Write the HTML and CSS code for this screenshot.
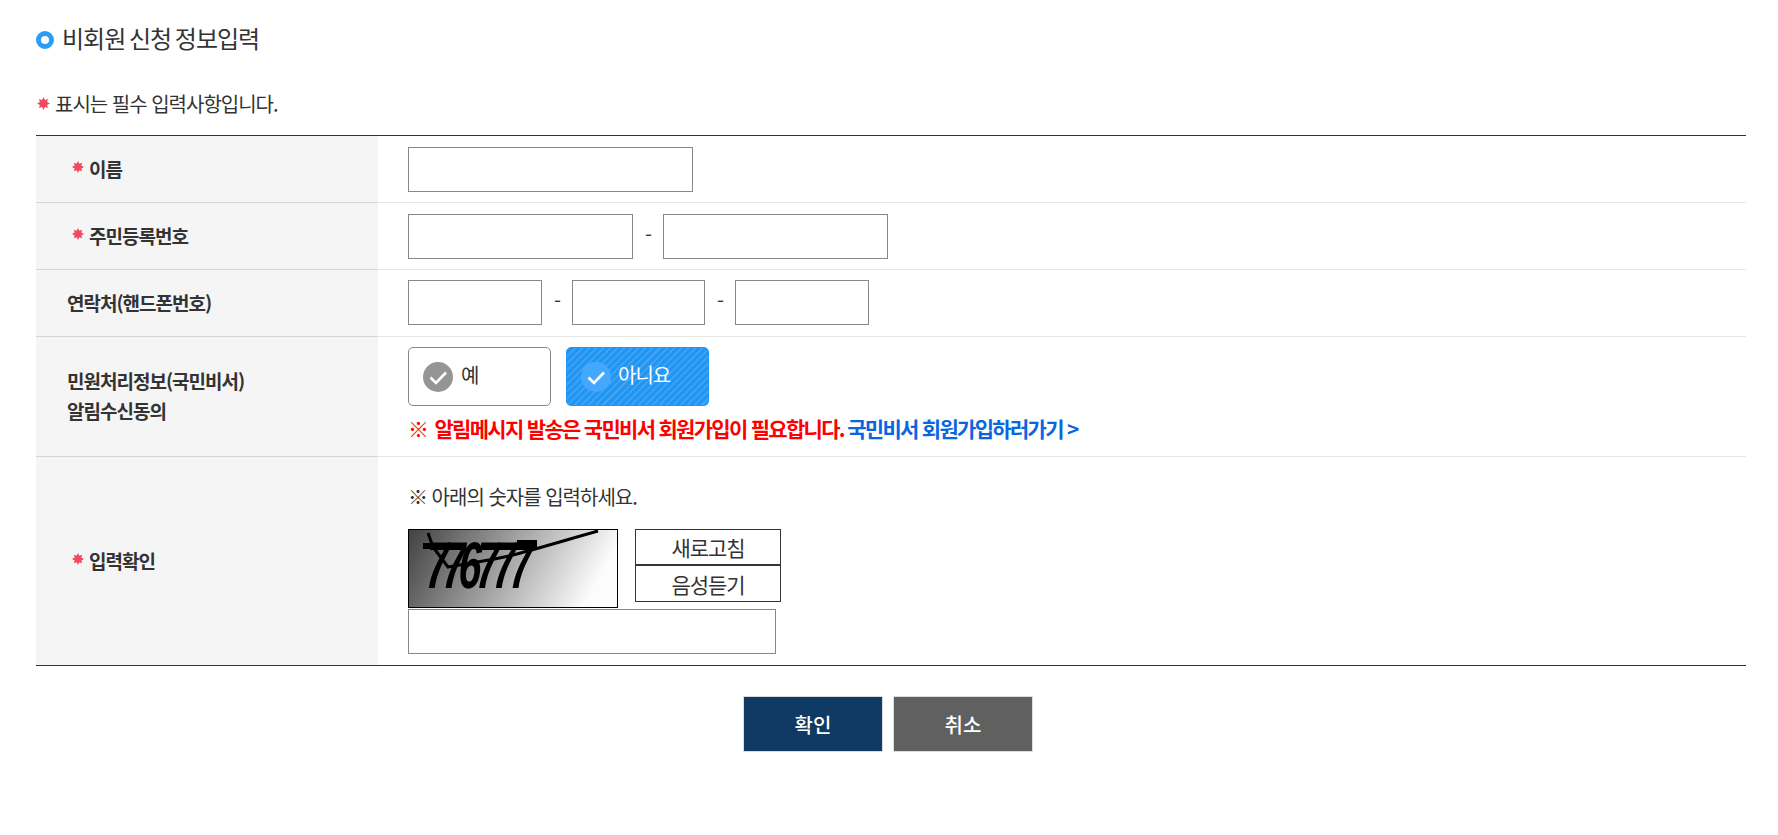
FILE: index.html
```html
<!DOCTYPE html>
<html lang="ko">
<head>
    <meta charset="UTF-8">
    <meta name="viewport" content="width=device-width, initial-scale=1.0">
    <title>비회원 신청 정보입력</title>
    <link rel="stylesheet" href="styles.css">
</head>
<body>
    <svg class="sprite" width="0" height="0">
        <symbol id="star" viewBox="0 0 12 12">
            <path d="M6 0 L7.38 2.67 L10.24 1.76 L9.33 4.62 L12 6 L9.33 7.38 L10.24 10.24 L7.38 9.33 L6 12 L4.62 9.33 L1.76 10.24 L2.67 7.38 L0 6 L2.67 4.62 L1.76 1.76 L4.62 2.67 Z" fill="#ef4a5e"/>
        </symbol>
        <symbol id="check" viewBox="0 0 30 30">
            <path d="M7.5 15.5 L13 21 L23 10.5" fill="none" stroke="#fff" stroke-width="2.6"/>
        </symbol>
    </svg>

    <div class="container">
        <h2 class="title"><span class="title-dot"></span><span class="title-text">비회원 신청 정보입력</span></h2>

        <p class="req-note"><svg class="star star-note"><use href="#star"/></svg>표시는 필수 입력사항입니다.</p>

        <table class="form-table">
            <tr class="row-basic">
                <th><span class="req"><svg class="star"><use href="#star"/></svg>이름</span></th>
                <td><input class="field w-name" type="text"></td>
            </tr>
            <tr class="row-basic">
                <th><span class="req"><svg class="star"><use href="#star"/></svg>주민등록번호</span></th>
                <td>
                    <div class="field-group">
                        <input class="field w-rrn" type="text">
                        <span class="dash">-</span>
                        <input class="field w-rrn" type="text">
                    </div>
                </td>
            </tr>
            <tr class="row-tel">
                <th>연락처(핸드폰번호)</th>
                <td>
                    <div class="field-group">
                        <input class="field w-tel" type="text">
                        <span class="dash">-</span>
                        <input class="field w-tel-mid" type="text">
                        <span class="dash">-</span>
                        <input class="field w-tel" type="text">
                    </div>
                </td>
            </tr>
            <tr class="row-agree">
                <th>민원처리정보(국민비서)<br>알림수신동의</th>
                <td>
                    <div class="choices">
                        <label class="choice"><span class="choice-icon"><svg><use href="#check"/></svg></span><span class="choice-text">예</span></label>
                        <label class="choice on"><span class="choice-icon"><svg><use href="#check"/></svg></span><span class="choice-text">아니요</span></label>
                    </div>
                    <p class="alert"><span class="alert-mark">※</span> 알림메시지 발송은 국민비서 회원가입이 필요합니다. <a href="#">국민비서 회원가입하러가기 &gt;</a></p>
                </td>
            </tr>
            <tr class="row-captcha">
                <th><span class="req"><svg class="star"><use href="#star"/></svg>입력확인</span></th>
                <td>
                    <p class="captcha-note">※ 아래의 숫자를 입력하세요.</p>
                    <div class="captcha">
                        <svg class="captcha-img" viewBox="0 0 208 77">
                            <defs>
                                <linearGradient id="shade" x1="0" y1="0" x2="1" y2="0.2">
                                    <stop offset="0" stop-color="#424242"/>
                                    <stop offset="1" stop-color="#fcfcfc"/>
                                </linearGradient>
                            </defs>
                            <rect width="208" height="77" fill="url(#shade)"/>
                            <text class="captcha-text" transform="translate(14 58) skewX(-8) scale(0.62 1)" textLength="172" lengthAdjust="spacing">776777</text>
                            <rect x="14" y="13" width="25" height="6"/>
                            <rect x="108" y="10" width="20" height="9"/>
                            <path class="captcha-line" d="M19 3 L24 17 L39 37 C60 33 79 31 100 26 C128 19 160 9 189 1"/>
                        </svg>
                        <div class="captcha-btns">
                            <button class="captcha-btn" type="button">새로고침</button>
                            <button class="captcha-btn" type="button">음성듣기</button>
                        </div>
                    </div>
                    <input class="field w-captcha" type="text">
                </td>
            </tr>
        </table>

        <div class="actions">
            <button class="btn btn-ok" type="button">확인</button>
            <button class="btn btn-cancel" type="button">취소</button>
        </div>
    </div>
</body>
</html>
```

FILE: styles.css
```css
* {
    box-sizing: border-box;
}

body {
    margin: 0;
    background: #fff;
    color: #333;
    font-family: "Noto Sans CJK KR", "Noto Sans", sans-serif;
    font-size: 20px;
    letter-spacing: -0.05em;
}

.sprite {
    position: absolute;
}

.container {
    padding: 0 32px 0 36px;
}

.title {
    display: flex;
    align-items: center;
    height: 36px;
    margin: 22px 0 0;
    font-size: 24px;
    font-weight: 400;
    word-spacing: -2px;
}

.title-dot {
    width: 18px;
    height: 18px;
    margin-right: 8px;
    border: 5px solid #2a9df4;
    border-radius: 50%;
}

.title-text {
    margin-bottom: 5px;
}

.req-note {
    display: flex;
    align-items: center;
    height: 30px;
    margin: 30px 0 0;
}

.star {
    width: 12px;
    height: 12px;
    margin-right: 5px;
    position: relative;
    top: -4px;
}

.star-note {
    width: 13px;
    height: 13px;
    margin-right: 5px;
    margin-left: 1px;
    top: 0;
}

.form-table {
    width: 100%;
    margin-top: 17px;
    border-collapse: separate;
    border-spacing: 0;
    border-top: 1px solid #333;
    border-bottom: 1px solid #333;
    table-layout: fixed;
}

.form-table th {
    width: 342px;
    padding: 0 0 0 31px;
    background: #f5f5f5;
    border-bottom: 1px solid #d4d4d4;
    font-weight: 700;
    font-size: 19px;
    line-height: 30px;
    text-align: left;
}

.form-table td {
    padding: 11px 30px 10px;
    border-bottom: 1px solid #e6e6e6;
}

.form-table .row-tel td {
    padding: 10px 30px 11px;
}

.form-table .row-agree td {
    padding: 10px 30px 12px;
}

.form-table .row-agree th {
    padding-bottom: 2px;
}

.form-table .row-captcha td {
    padding: 26px 30px 11px;
}

.form-table tr:last-child th,
.form-table tr:last-child td {
    border-bottom: 0;
}

.req {
    margin-left: 5px;
}

.field {
    display: block;
    height: 45px;
    padding: 0 8px;
    background: #fff;
    border: 1px solid #888;
    border-radius: 0;
}

.w-name {
    width: 285px;
}

.w-rrn {
    width: 225px;
}

.w-tel {
    width: 134px;
}

.w-tel-mid {
    width: 133px;
}

.w-captcha {
    width: 368px;
    margin-top: 1px;
}

.field-group {
    display: flex;
    align-items: center;
}

.dash {
    width: 30px;
    text-align: center;
    position: relative;
    top: -2px;
}

.choices {
    display: flex;
    gap: 15px;
}

.choice {
    display: flex;
    align-items: center;
    width: 143px;
    height: 59px;
    padding-left: 14px;
    background: #fff;
    border: 1px solid #888;
    border-radius: 5px;
    font-size: 20px;
    line-height: 30px;
}

.choice-icon {
    flex: none;
    width: 30px;
    height: 30px;
    margin-right: 8px;
    background: #959595;
    border-radius: 50%;
}

.choice-icon svg {
    display: block;
    width: 30px;
    height: 30px;
}

.choice-text {
    margin-bottom: 3px;
}

.choice.on {
    background: repeating-linear-gradient(-45deg, #2196f3 0 3.5px, #45a5f5 3.5px 5px);
    border-color: #2196f3;
    color: #fff;
}

.choice.on .choice-icon {
    background: #45a8ff;
    margin-right: 7px;
}

.alert {
    margin: 6px 0 0;
    color: #f00;
    font-size: 21px;
    font-weight: 700;
    line-height: 32px;
    letter-spacing: -1.7px;
}

.alert-mark {
    margin-right: 3px;
}

.alert a {
    margin-left: -1px;
    color: #0a66e0;
    text-decoration: none;
}

.captcha-note {
    margin: 0;
    font-size: 20px;
    line-height: 28px;
}

.captcha {
    display: flex;
    gap: 17px;
    margin-top: 18px;
}

.captcha-img {
    display: block;
    width: 210px;
    height: 79px;
    border: 1px solid #000;
}

.captcha-text {
    font-family: "Liberation Sans", sans-serif;
    font-size: 66px;
    font-weight: 700;
    letter-spacing: 0;
}

.captcha-line {
    fill: none;
    stroke: #000;
    stroke-width: 3;
}

.captcha-btns {
    display: flex;
    flex-direction: column;
}

.captcha-btn {
    width: 146px;
    height: 37px;
    padding: 0;
    background: #fff;
    border: 1px solid #333;
    color: #333;
    font-family: inherit;
    font-size: 21px;
    letter-spacing: -0.05em;
}

.captcha-btn:first-child {
    height: 36px;
}

.actions {
    display: flex;
    justify-content: center;
    gap: 10px;
    margin: 30px 6px 0 0;
}

.btn {
    width: 140px;
    height: 56px;
    padding: 0;
    border: 1px solid #ddd;
    color: #fff;
    font-family: inherit;
    font-size: 20px;
    font-weight: 500;
}

.btn-ok {
    background: #0e3a63;
}

.btn-cancel {
    background: #606060;
}
```
